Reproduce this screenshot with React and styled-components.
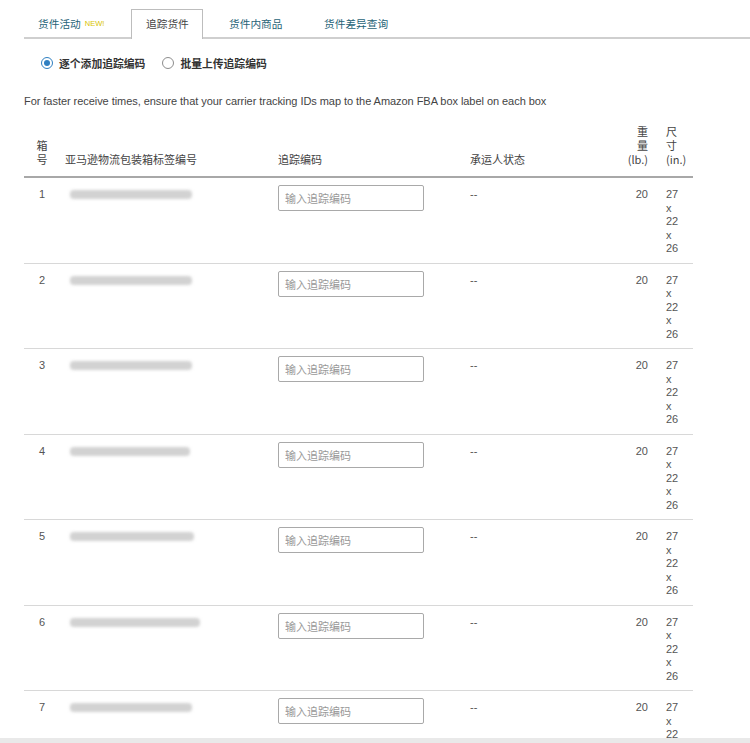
import React from 'react'
import styled, { createGlobalStyle } from 'styled-components'

const GlobalStyle = createGlobalStyle`
  html, body {
    margin: 0;
    padding: 0;
    background: #fff;
    overflow: hidden;
  }
  body {
    font-family: "Liberation Sans", "Noto Sans CJK SC", sans-serif;
    color: #444;
  }
`

const Page = styled.div`
  width: 750px;
  height: 743px;
  overflow: hidden;
  padding-top: 9px;
  box-sizing: border-box;
`

const TabBar = styled.div`
  display: flex;
  margin-left: 24px;
  border-bottom: 2px solid #cfcfcf;
  height: 28px;
`

const Tab = styled.div`
  display: flex;
  align-items: center;
  box-sizing: border-box;
  width: ${(p) => p.w}px;
  padding-left: ${(p) => p.pl}px;
  font-size: 10.7px;
  font-family: "Noto Sans CJK SC", sans-serif;
  color: ${(p) => (p.active ? '#444' : '#1f6377')};
  background: #fff;
  border: ${(p) => (p.active ? '1px solid #bdbdbd' : '1px solid transparent')};
  border-bottom: none;
  margin-bottom: ${(p) => (p.active ? '-2px' : '0')};
  height: ${(p) => (p.active ? '30px' : '28px')};
  padding-bottom: ${(p) => (p.active ? '2px' : '0')};
`

const NewBadge = styled.span`
  font-size: 7.5px;
  color: #d9c300;
  margin-left: 4px;
  font-family: "Liberation Sans", sans-serif;
`

const RadioRow = styled.div`
  display: flex;
  align-items: center;
  margin: 17px 0 0 41px;
  height: 14px;
`

const RadioOption = styled.label`
  display: flex;
  align-items: center;
  gap: 6px;
  margin-right: 17px;
  font-size: 10.8px;
  font-weight: bold;
  font-family: "Noto Sans CJK SC", sans-serif;
  color: #333;
`

const RadioDot = styled.span`
  width: 12px;
  height: 12px;
  border-radius: 50%;
  box-sizing: border-box;
  border: 1px solid ${(p) => (p.checked ? '#2f7fc1' : '#8d8d8d')};
  display: flex;
  align-items: center;
  justify-content: center;
  background: #fff;

  &::after {
    content: '';
    width: 6px;
    height: 6px;
    border-radius: 50%;
    background: ${(p) => (p.checked ? '#2f7fc1' : 'transparent')};
  }
`

const Notice = styled.p`
  margin: 25px 0 0 24px;
  font-size: 11px;
  color: #444;
  letter-spacing: -0.05px;
`

const Table = styled.div`
  margin: 17px 0 0 24px;
  width: 669px;
`

const Grid = styled.div`
  display: grid;
  grid-template-columns: 36px 212px 193px 135px 55px 38px;
`

const HeadRow = styled(Grid)`
  align-items: end;
  border-bottom: 2px solid #a8a8a8;
  padding-bottom: 10px;
  font-size: 11px;
  font-family: "Noto Sans CJK SC", sans-serif;
  color: #444;
  line-height: 14px;
`

const HeadCell = styled.div`
  text-align: ${(p) => p.align || 'left'};
  padding-left: ${(p) => p.pl || 0}px;
  padding-right: ${(p) => p.pr || 0}px;
`

const Row = styled(Grid)`
  align-items: start;
  border-bottom: 1px solid #d8d8d8;
  padding: 10px 0 10px;
  height: 85.5px;
  box-sizing: border-box;
  font-size: 11px;
  line-height: 13.5px;
  color: #555;
`

const Cell = styled.div`
  text-align: ${(p) => p.align || 'left'};
  padding-left: ${(p) => p.pl || 0}px;
  padding-right: ${(p) => p.pr || 0}px;
`

const Blurred = styled.div`
  width: ${(p) => p.w}px;
  height: 9px;
  margin: 2px 0 0 10px;
  background: #d2d2d2;
  border-radius: 4px;
  filter: blur(1.5px);
`

const TrackInput = styled.input`
  display: block;
  width: 146px;
  height: 26px;
  box-sizing: border-box;
  margin: -3px 0 0 6px;
  border: 1px solid #a9a9a9;
  border-radius: 2px;
  padding: 0 6px;
  font-size: 11px;
  font-family: "Noto Sans CJK SC", sans-serif;
  outline: none;

  &::placeholder {
    color: #999;
  }
`

const Dims = styled.div`
  padding-left: 11px;
  display: flex;
  flex-direction: column;
`

const BottomStrip = styled.div`
  position: fixed;
  left: 0;
  right: 0;
  bottom: 0;
  height: 5px;
  background: #e9e9e9;
`

const rows = [1, 2, 3, 4, 5, 6, 7]
const blurWidths = [122, 122, 122, 120, 124, 130, 122]

export default function App() {
  return (
    <>
      <GlobalStyle />
      <Page>
        <TabBar>
          <Tab w={107} pl={13}>
            货件活动<NewBadge>NEW!</NewBadge>
          </Tab>
          <Tab w={72} pl={14} active>追踪货件</Tab>
          <Tab w={108} pl={25}>货件内商品</Tab>
          <Tab w={100} pl={12}>货件差异查询</Tab>
        </TabBar>

        <RadioRow>
          <RadioOption>
            <RadioDot checked />
            逐个添加追踪编码
          </RadioOption>
          <RadioOption>
            <RadioDot />
            批量上传追踪编码
          </RadioOption>
        </RadioRow>

        <Notice>
          For faster receive times, ensure that your carrier tracking IDs map to the Amazon FBA box label on each box
        </Notice>

        <Table>
          <HeadRow>
            <HeadCell align="center">箱<br />号</HeadCell>
            <HeadCell pl={5}>亚马逊物流包装箱标签编号</HeadCell>
            <HeadCell pl={6}>追踪编码</HeadCell>
            <HeadCell pl={5}>承运人状态</HeadCell>
            <HeadCell align="right" pr={7}>重<br />量<br />(lb.)</HeadCell>
            <HeadCell pl={11}>尺<br />寸<br />(in.)</HeadCell>
          </HeadRow>
          {rows.map((n, i) => (
            <Row key={n}>
              <Cell align="center">{n}</Cell>
              <Cell>
                <Blurred w={blurWidths[i]} />
              </Cell>
              <Cell>
                <TrackInput placeholder="输入追踪编码" />
              </Cell>
              <Cell pl={5}>--</Cell>
              <Cell align="right" pr={7}>20</Cell>
              <Dims>
                <span>27</span>
                <span>x</span>
                <span>22</span>
                <span>x</span>
                <span>26</span>
              </Dims>
            </Row>
          ))}
        </Table>
        <BottomStrip />
      </Page>
    </>
  )
}
